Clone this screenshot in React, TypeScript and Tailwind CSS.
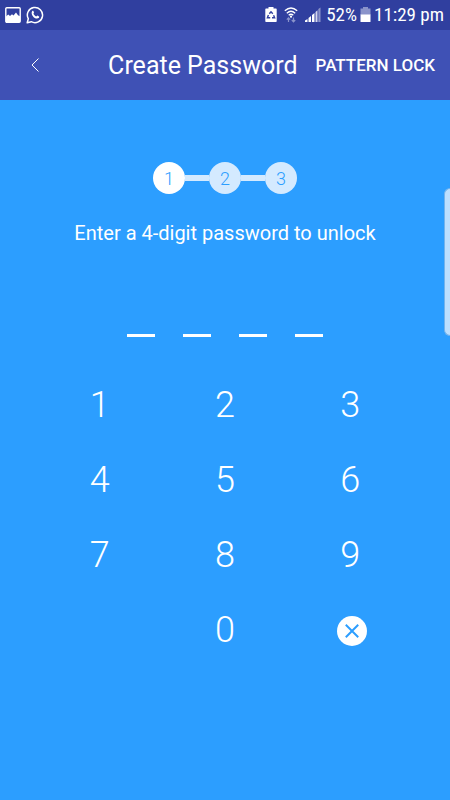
import { Fragment } from "react";

function PictureIcon() {
  return (
    <svg width="16" height="16" viewBox="0 0 16 16" aria-hidden="true">
      <rect x=".8" y=".8" width="14.400" height="14.400" rx="1" fill="none" stroke="white" strokeWidth="1.400" />
      <path d="M1 9.500 3.200 7.500 5 9l2-1.800L8.500 8.500l2.500-3 2 2.800 2 1V15H1z" fill="white" />
    </svg>
  );
}

function WhatsAppIcon() {
  return (
    <svg width="18" height="18" viewBox="0 0 18 18" aria-hidden="true">
      <path
        d="M1.200 16.800 2.300 12.700A7.600 7.600 0 1 1 5.300 15.700z"
        fill="none"
        stroke="white"
        strokeWidth="1.500"
        strokeLinejoin="round"
      />
      <path
        d="M6.200 4.900c.5-.4 1-.3 1.200.2l.6 1.400c.1.400-.6 1-.6 1.300.6 1.200 1.600 2.100 2.800 2.600.4 0 .9-.9 1.300-.8l1.500.8c.4.300.200 1.200-.4 1.700-2.800 2.100-8.800-3.200-6.400-7.200z"
        fill="white"
      />
    </svg>
  );
}

function RecycleBatteryIcon() {
  return (
    <svg width="12" height="16" viewBox="0 0 12 16" aria-hidden="true">
      <path d="M3.500 0h5v1.500H11q.7 0 .7.700V14.300q0 .7-.7.700H1q-.7 0-.7-.7V2.200q0-.7.7-.7h2.500z" fill="white" />
      <path
        d="M4.300 6.800 6 4.800l1.800 2M8.600 8.300l1 2.400H7M5.200 10.700H2.400l1-2.600"
        fill="none"
        stroke="#303f9f"
        strokeWidth="1.400"
      />
    </svg>
  );
}

function WifiIcon() {
  return (
    <svg width="14" height="16" viewBox="0 0 14 16" aria-hidden="true">
      <g fill="none" stroke="white" strokeWidth="1.300">
        <path d="M.8 3.800Q7-1.800 13.200 3.800" />
        <path d="M2.800 6.200Q7 2.400 11.200 6.200" />
        <path d="M4.700 8.300Q7 6.300 9.300 8.300" />
      </g>
      <circle cx="7" cy="9.700" r="1.100" fill="white" />
      <path
        d="M4.500 15v-4M2.800 12.600l1.700-1.800 1.700 1.800M9.500 10.500v4M7.800 13l1.700 1.800 1.700-1.800"
        fill="none"
        stroke="#8a93ca"
        strokeWidth="1.200"
      />
    </svg>
  );
}

function SignalIcon() {
  return (
    <svg width="16" height="16" viewBox="0 0 16 16" aria-hidden="true">
      <path d="M0 15v-1.500L2.500 12v3zM3.500 15v-4L6 9v6zM7 15V8l2.500-2v9z" fill="white" />
      <path d="M10.500 15V5L12.500 3.300V15z" fill="#d5d8ed" />
      <path d="M13.300 15V2L15.500.5V15z" fill="#8a93ca" />
    </svg>
  );
}

function BatteryIcon() {
  return (
    <svg width="11" height="16" viewBox="0 0 11 16" aria-hidden="true">
      <path d="M3 0h5v1.500h2.500V8H.5V1.500H3z" fill="#8a93ca" />
      <path d="M.5 7.500h10V14.500q0 .5-.5.500H1q-.5 0-.5-.5z" fill="white" />
    </svg>
  );
}

function StatusBar() {
  return (
    <div className="flex h-[30px] items-center justify-between bg-[#303f9f] pr-[6px] pl-[5px]">
      <div className="flex items-center gap-[5px]">
        <PictureIcon />
        <WhatsAppIcon />
      </div>
      <div className="flex items-center">
        <div className="flex items-center gap-[7px] pr-[5px]">
          <RecycleBatteryIcon />
          <WifiIcon />
          <SignalIcon />
        </div>
        <span className="font-['Roboto_Condensed',Roboto,sans-serif] text-[19px] leading-6">52%</span>
        <span className="px-[3px]">
          <BatteryIcon />
        </span>
        <span className="font-['Roboto_Condensed',Roboto,sans-serif] text-[19px] leading-6">11:29 pm</span>
      </div>
    </div>
  );
}

function TitleBar() {
  return (
    <header className="flex h-[70px] items-center bg-[#3f51b5] pr-[15px] pl-[23px]">
      <button type="button" aria-label="Back" className="flex size-6 items-center justify-center">
        <svg width="8" height="14" viewBox="0 0 8 14" fill="none" stroke="white" strokeWidth="1" aria-hidden="true">
          <path d="M7.500.5 1 7l6.500 6.500" />
        </svg>
      </button>
      <h1 className="flex-1 pt-[2px] pr-[18px] text-right text-[25px] leading-8 whitespace-nowrap">
        Create Password
      </h1>
      <button type="button" className="text-[17px] leading-6 font-medium whitespace-nowrap">
        PATTERN LOCK
      </button>
    </header>
  );
}

function Steps({ current }: { current: number }) {
  return (
    <ol className="flex items-center justify-center">
      {[1, 2, 3].map((step) => (
        <Fragment key={step}>
          {step > 1 && <li aria-hidden="true" className="h-[6px] w-6 bg-[#d4eaff]" />}
          <li
            aria-current={step === current ? "step" : undefined}
            className={`flex size-8 items-center justify-center rounded-full pt-[2px] text-lg font-light text-[#2c9eff] ${
              step === current ? "bg-white" : "bg-[#d4eaff]"
            }`}
          >
            {step}
          </li>
        </Fragment>
      ))}
    </ol>
  );
}

function Keypad() {
  return (
    <div className="mt-[30px] grid w-full grid-cols-3 px-[37px]">
      {["1", "2", "3", "4", "5", "6", "7", "8", "9", "0"].map((digit) => (
        <button
          key={digit}
          type="button"
          className={`h-[75px] text-4xl font-light ${digit === "0" ? "col-start-2" : ""}`}
        >
          {digit}
        </button>
      ))}
      <button type="button" aria-label="Delete" className="flex h-[75px] items-center justify-center">
        <svg width="34" height="34" viewBox="0 0 34 34" aria-hidden="true">
          <circle cx="19" cy="18" r="15" fill="white" />
          <path d="m13.500 12.500 11 11m0-11-11 11" stroke="#2c9eff" strokeWidth="2" strokeLinecap="square" />
        </svg>
      </button>
    </div>
  );
}

export default function App() {
  return (
    <div className="relative flex min-h-screen flex-col bg-[#2c9eff] font-[Roboto,sans-serif] text-white">
      <StatusBar />
      <TitleBar />
      <main className="flex flex-col items-center pt-[62px]">
        <Steps current={1} />
        <p className="mt-6 text-xl leading-[30px]">Enter a 4-digit password to unlock</p>
        <div className="mt-[86px] flex gap-7" role="img" aria-label="No digits entered">
          {[0, 1, 2, 3].map((slot) => (
            <span key={slot} className="h-[3px] w-7 bg-white" />
          ))}
        </div>
        <Keypad />
      </main>
      <div className="absolute top-[188px] right-0 h-[148px] w-[6px] rounded-l-md border border-r-0 border-[#75b3eb] bg-[#bcdfff]" />
    </div>
  );
}
